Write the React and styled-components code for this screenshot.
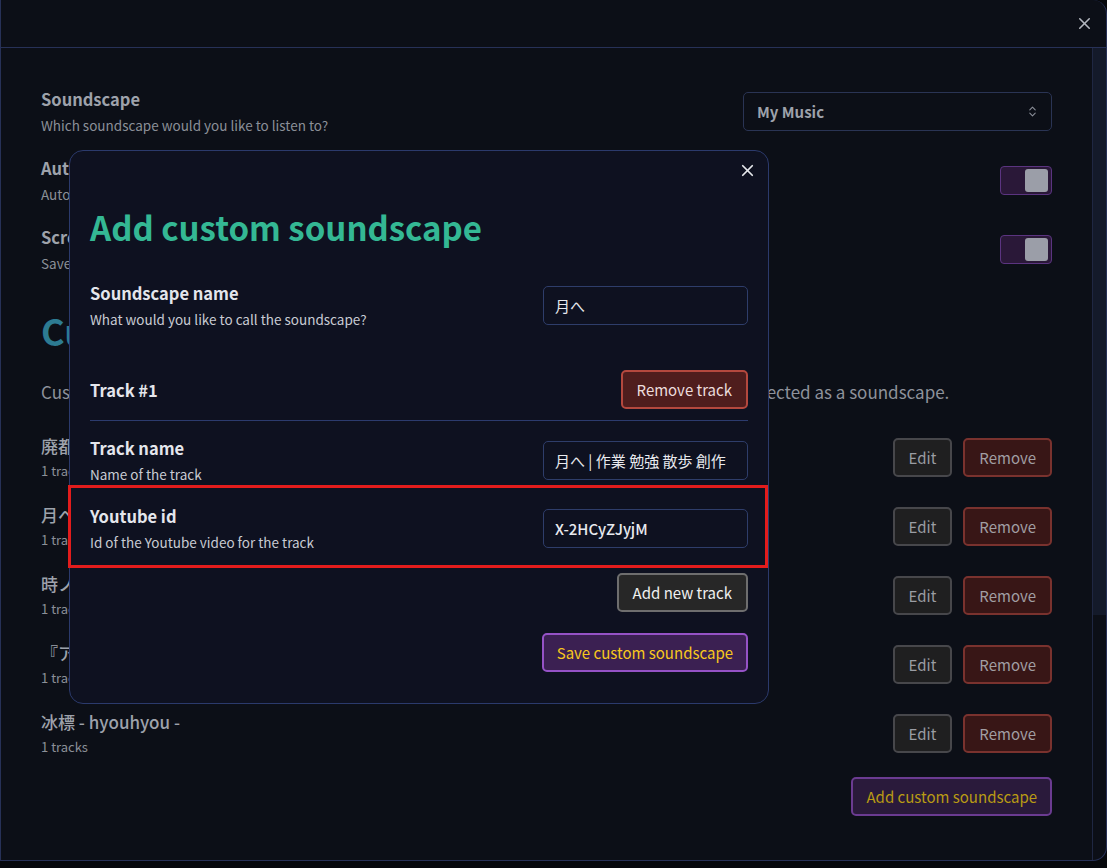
import React from 'react';
import styled, { createGlobalStyle, css } from 'styled-components';
import { X, ChevronsUpDown } from 'lucide-react';

const GlobalStyle = createGlobalStyle`
  * { box-sizing: border-box; }
  body {
    margin: 0;
    background: #06080c;
    font-family: "Noto Sans CJK JP", "Noto Sans", sans-serif;
  }
`;

const Page = styled.div`
  position: relative;
  width: 1107px;
  height: 868px;
  overflow: hidden;
`;

const Panel = styled.div`
  height: 861px;
  border: 1px solid #273157;
  border-top: none;
  border-radius: 0 14px 14px 0;
  background: #0c0f17;
  display: flex;
  flex-direction: column;
  overflow: hidden;
`;

const PanelHeader = styled.div`
  height: 48px;
  flex-shrink: 0;
  border-bottom: 1px solid #273157;
  display: flex;
  justify-content: flex-end;
  align-items: center;
  padding-right: 12px;
`;

const CloseBtn = styled.button`
  border: none;
  background: none;
  padding: 0;
  display: flex;
  color: ${p => (p.dim ? '#b3b7bf' : '#e6e8ec')};
  cursor: pointer;
`;

const PanelBody = styled.div`
  flex: 1;
  display: flex;
  min-height: 0;
`;

const Scroll = styled.div`
  flex: 1;
  padding: 40px 40px 0 40px;
`;

const ScrollTrack = styled.div`
  width: 14px;
  border-left: 1px solid #1f2742;
`;

const ScrollThumb = styled.div`
  height: 567px;
  background: #141a2a;
`;

const Row = styled.div`
  display: flex;
  justify-content: space-between;
  align-items: center;
  min-height: ${p => (p.compact ? 0 : 46)}px;
  margin-top: ${p => p.mt || 0}px;
`;

const TextBlock = styled.div`
  display: flex;
  flex-direction: column;
  gap: ${p => p.gap || 6}px;
`;

const Label = styled.div`
  font-size: 16.5px;
  line-height: 22px;
  font-weight: 600;
  color: ${p => (p.dim ? '#9ea2ab' : '#e4e6ec')};
  white-space: nowrap;
`;

const Desc = styled.div`
  font-size: 13.5px;
  line-height: 18px;
  color: ${p => (p.dim ? '#8b8f98' : '#c8cbd3')};
  white-space: nowrap;
`;

const ItemName = styled.div`
  font-size: 17px;
  line-height: 22px;
  font-weight: 500;
  color: #9ea2ab;
  white-space: nowrap;
`;

const ItemMeta = styled.div`
  font-size: 13px;
  line-height: 18px;
  color: #8b8f98;
`;

const Select = styled.div`
  width: 309px;
  height: 39px;
  border: 1px solid #2a3454;
  border-radius: 5px;
  display: flex;
  align-items: center;
  justify-content: space-between;
  padding: 0 12px 0 13px;
  font-size: 15px;
  font-weight: 600;
  color: #9ea2ab;
  svg { color: #8a8e98; }
`;

const Toggle = styled.div`
  width: 52px;
  height: 29px;
  border: 1px solid #5b3480;
  border-radius: 4px;
  background: #2a1838;
  display: flex;
  justify-content: flex-end;
  align-items: center;
  padding-right: 3px;
`;

const Knob = styled.div`
  width: 23px;
  height: 23px;
  border-radius: 3px;
  background: #9b9ea8;
`;

const Heading = styled.h2`
  margin: 36px 0 0;
  font-size: 36px;
  line-height: 44px;
  font-weight: 700;
  color: #2d7b92;
  white-space: nowrap;
`;

const Para = styled.p`
  margin: 28px 0 0;
  font-size: 17px;
  line-height: 24px;
  color: #8e929b;
  white-space: nowrap;
`;

const List = styled.div`
  margin-top: 30px;
  display: flex;
  flex-direction: column;
  gap: 23px;
`;

const Actions = styled.div`
  display: flex;
  gap: 11px;
`;

const variants = {
  edit: css`background: #1f1f20; border-color: #47474b; color: #9a9ca3;`,
  remove: css`background: #381616; border-color: #7a322e; color: #a19ea3;`,
  addMuted: css`background: #2a1a3b; border-color: #6b3b91; color: #b99b14;`,
  danger: css`background: #4f1d1d; border-color: #b4483e; color: #ecdcdc;`,
  neutral: css`background: #272727; border-color: #6e6e6e; color: #f0f0f0;`,
  save: css`background: #3b2052; border-color: #9552c6; color: #f7c81d;`,
};

const Button = styled.button`
  height: 39px;
  padding: 0 ${p => (p.tight ? 13 : 14)}px;
  border: 2px solid;
  border-radius: 5px;
  font-family: inherit;
  font-size: 15px;
  font-weight: 400;
  white-space: nowrap;
  cursor: pointer;
  ${p => variants[p.variant]}
`;

const RightRow = styled.div`
  display: flex;
  justify-content: flex-end;
  margin-top: ${p => p.mt || 0}px;
`;

const Modal = styled.div`
  position: absolute;
  left: 69px;
  top: 150px;
  width: 700px;
  border: 1px solid #2b3a6c;
  border-radius: 14px;
  background: #0e1120;
  padding: 0 20px 31px;
`;

const ModalClose = styled.div`
  position: absolute;
  top: 10px;
  right: 11px;
`;

const Title = styled.h1`
  margin: 56px 0 0;
  font-size: 33px;
  line-height: 40px;
  font-weight: 700;
  color: #34b894;
  white-space: nowrap;
`;

const Input = styled.input`
  width: 205px;
  height: 39px;
  border: 1px solid #2e3d6a;
  border-radius: 5px;
  background: transparent;
  padding: 0 11px;
  font-family: inherit;
  font-size: 15px;
  font-weight: ${p => (p.strong ? 500 : 400)};
  color: #e8e9ee;
  outline: none;
`;

const Divider = styled.div`
  height: 1px;
  background: #2c3b6e;
  margin-top: 11px;
`;

const Highlight = styled.div`
  margin: 2px -20px 0 -22px;
  border: 3px solid #e21c1c;
  padding: 17px 17px 14px 19px;
`;

const items = [
  '廃都 - haito -',
  '月へ - tsukihe -',
  '時ノ雨 - tokinoame -',
  '『ア』',
  '冰標 - hyouhyou -',
];

const Setting = ({ label, desc, children, mt }) => (
  <Row mt={mt}>
    <TextBlock>
      <Label dim>{label}</Label>
      <Desc dim>{desc}</Desc>
    </TextBlock>
    {children}
  </Row>
);

const Field = ({ label, desc, value, mt, strong }) => (
  <Row mt={mt}>
    <TextBlock>
      <Label>{label}</Label>
      <Desc>{desc}</Desc>
    </TextBlock>
    <Input defaultValue={value} readOnly strong={strong} />
  </Row>
);

export default function App() {
  return (
    <Page>
      <GlobalStyle />
      <Panel>
        <PanelHeader>
          <CloseBtn dim>
            <X size={19} strokeWidth={2} />
          </CloseBtn>
        </PanelHeader>
        <PanelBody>
          <Scroll>
            <Setting label="Soundscape" desc="Which soundscape would you like to listen to?">
              <Select>
                My Music
                <ChevronsUpDown size={13} strokeWidth={2} />
              </Select>
            </Setting>
            <Setting mt={23} label="Autoplay" desc="Automatically start playing when the app opens">
              <Toggle><Knob /></Toggle>
            </Setting>
            <Setting mt={23} label="Screensaver" desc="Save your screen when idle">
              <Toggle><Knob /></Toggle>
            </Setting>
            <Heading>Custom soundscapes</Heading>
            <Para>
              Custom soundscapes are a collection of YouTube videos of your own choice which can be selected as a soundscape.
            </Para>
            <List>
              {items.map(name => (
                <Row key={name}>
                  <TextBlock gap={5}>
                    <ItemName>{name}</ItemName>
                    <ItemMeta>1 tracks</ItemMeta>
                  </TextBlock>
                  <Actions>
                    <Button variant="edit">Edit</Button>
                    <Button variant="remove">Remove</Button>
                  </Actions>
                </Row>
              ))}
            </List>
            <RightRow mt={21}>
              <Button variant="addMuted" tight>Add custom soundscape</Button>
            </RightRow>
          </Scroll>
          <ScrollTrack>
            <ScrollThumb />
          </ScrollTrack>
        </PanelBody>
      </Panel>

      <Modal>
        <ModalClose>
          <CloseBtn>
            <X size={19} strokeWidth={2.2} />
          </CloseBtn>
        </ModalClose>
        <Title>Add custom soundscape</Title>
        <Field mt={35} label="Soundscape name" desc="What would you like to call the soundscape?" value="月へ" />
        <Row compact mt={42}>
          <Label>Track #1</Label>
          <Button variant="danger">Remove track</Button>
        </Row>
        <Divider />
        <Field mt={16} label="Track name" desc="Name of the track" value="月へ | 作業 勉強 散歩 創作" />
        <Highlight>
          <Field label="Youtube id" desc="Id of the Youtube video for the track" value="X-2HCyZJyjM" strong />
        </Highlight>
        <RightRow mt={5}>
          <Button variant="neutral">Add new track</Button>
        </RightRow>
        <RightRow mt={21}>
          <Button variant="save" tight>Save custom soundscape</Button>
        </RightRow>
      </Modal>
    </Page>
  );
}
